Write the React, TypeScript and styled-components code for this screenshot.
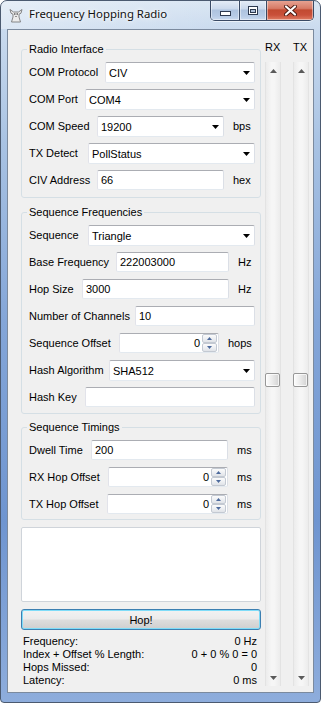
import React from "react";
import styled, { createGlobalStyle } from "styled-components";

type FieldKind = "combo" | "text" | "numeric";

type FieldDef = {
  label: string;
  kind: FieldKind;
  x: number;
  end: number;
  value: string;
  unit?: string;
};

// left edge of row content (page x), everything below is placed from here
const ROW_LEFT = 29;

const radioFields: FieldDef[] = [
  { label: "COM Protocol", kind: "combo", x: 105, end: 255, value: "CIV" },
  { label: "COM Port", kind: "combo", x: 85, end: 255, value: "COM4" },
  { label: "COM Speed", kind: "combo", x: 97, end: 224, value: "19200", unit: "bps" },
  { label: "TX Detect", kind: "combo", x: 88, end: 255, value: "PollStatus" },
  { label: "CIV Address", kind: "text", x: 97, end: 224, value: "66", unit: "hex" },
];

const sequenceFields: FieldDef[] = [
  { label: "Sequence", kind: "combo", x: 88, end: 255, value: "Triangle" },
  { label: "Base Frequency", kind: "text", x: 116, end: 229, value: "222003000", unit: "Hz" },
  { label: "Hop Size", kind: "text", x: 82, end: 229, value: "3000", unit: "Hz" },
  { label: "Number of Channels", kind: "text", x: 135, end: 255, value: "10" },
  { label: "Sequence Offset", kind: "numeric", x: 119, end: 219, value: "0", unit: "hops" },
  { label: "Hash Algorithm", kind: "combo", x: 109, end: 255, value: "SHA512" },
  { label: "Hash Key", kind: "text", x: 85, end: 255, value: "" },
];

const timingFields: FieldDef[] = [
  { label: "Dwell Time", kind: "text", x: 91, end: 228, value: "200", unit: "ms" },
  { label: "RX Hop Offset", kind: "numeric", x: 108, end: 228, value: "0", unit: "ms" },
  { label: "TX Hop Offset", kind: "numeric", x: 107, end: 228, value: "0", unit: "ms" },
];

const stats = [
  ["Frequency:", "0 Hz"],
  ["Index + Offset % Length:", "0 + 0 % 0 = 0"],
  ["Hops Missed:", "0"],
  ["Latency:", "0 ms"],
];

const GlobalStyle = createGlobalStyle`
  html, body {
    margin: 0;
    padding: 0;
    background: #ffffff;
  }
  body {
    font-family: "Liberation Sans", Arial, sans-serif;
    font-size: 11px;
    color: #000;
  }
`;

const Window = styled.div`
  width: 321px;
  height: 703px;
  box-sizing: border-box;
  border: 1px solid #4b5a70;
  border-radius: 7px 7px 4px 4px;
  overflow: hidden;
  display: flex;
  flex-direction: column;
  background: linear-gradient(
    180deg,
    #dae6f3 0px,
    #c9daee 30px,
    #a9c3e3 140px,
    #84a6d8 320px,
    #6f95d0 520px,
    #8eaddc 703px
  );
`;

const TitleBar = styled.div`
  height: 28px;
  flex: none;
  display: flex;
  align-items: flex-start;
  padding-left: 7px;
  background: linear-gradient(90deg, rgba(255, 255, 255, 0.35), rgba(255, 255, 255, 0) 70%);
`;

const AppIcon = styled.svg`
  margin-top: 6px;
  flex: none;
`;

const Title = styled.div`
  margin: 5px 0 0 5px;
  font-family: "Noto Sans", "Open Sans", sans-serif;
  font-size: 11.4px;
  line-height: 16px;
  color: #111;
  text-shadow: 0 0 6px #fff, 0 0 3px #fff;
  flex: 1;
  white-space: nowrap;
`;

const CaptionGroup = styled.div`
  display: flex;
  margin: -1px 6px 0 0;
  height: 20px;
  border: 1px solid #3a4a64;
  border-top: none;
  border-radius: 0 0 5px 5px;
  overflow: hidden;
  box-shadow: 0 1px 0 rgba(255, 255, 255, 0.6);
`;

const CaptionButton = styled.div<{ $w: number; $close?: boolean }>`
  width: ${(p) => p.$w}px;
  height: 100%;
  display: flex;
  align-items: center;
  justify-content: center;
  box-shadow: inset 0 0 0 1px rgba(255, 255, 255, 0.45);
  background: ${(p) =>
    p.$close
      ? "linear-gradient(180deg, #e8a797 0%, #d77a66 42%, #c24a31 50%, #c9503a 75%, #df7c63 100%)"
      : "linear-gradient(180deg, #e7eef7 0%, #cbd9ec 45%, #aec3df 50%, #b7cbe6 80%, #cadaef 100%)"};
  & + & {
    border-left: 1px solid #3a4a64;
  }
`;

const Client = styled.div`
  flex: 1;
  margin: 0 6px 9px 6px;
  border: 1px solid #7b8a9e;
  background: #f0f0f0;
  display: flex;
  align-items: flex-start;
`;

const LeftColumn = styled.div`
  width: 240px;
  margin-left: 13px;
  padding-top: 13px;
  display: flex;
  flex-direction: column;
`;

const Group = styled.fieldset<{ $top: number; $bottom: number }>`
  margin: ${(p) => p.$top}px 0 0 0;
  padding: 6px 0 ${(p) => p.$bottom}px 7px;
  border: 1px solid #d5dfe5;
  border-radius: 3px;
  min-width: 0;
  display: flex;
  flex-direction: column;
  gap: 6px;
`;

const Legend = styled.legend`
  padding: 0 2px;
  margin-left: -2px;
  line-height: 13px;
  font-size: 11px;
`;

const Row = styled.div`
  display: flex;
  align-items: flex-start;
  height: 21px;
`;

const Label = styled.div<{ $w: number }>`
  width: ${(p) => p.$w}px;
  flex: none;
  line-height: 21px;
  white-space: nowrap;
`;

const Box = styled.div<{ $w: number; $h: number }>`
  width: ${(p) => p.$w}px;
  height: ${(p) => p.$h}px;
  box-sizing: border-box;
  flex: none;
  background: #fff;
  border: 1px solid;
  border-color: #abadb3 #dbdfe6 #e3e9ef #e2e3ea;
  border-radius: 2px;
  display: flex;
  align-items: center;
  padding-left: 3px;
  line-height: 16px;
  overflow: hidden;
`;

const BoxText = styled.span<{ $right?: boolean }>`
  flex: 1;
  text-align: ${(p) => (p.$right ? "right" : "left")};
  padding-right: ${(p) => (p.$right ? "2px" : "0")};
  white-space: nowrap;
`;

const ComboArrow = styled.svg`
  flex: none;
  margin-right: 4px;
`;

const Spinner = styled.div`
  width: 15px;
  height: 18px;
  margin-right: 1px;
  display: flex;
  flex-direction: column;
  flex: none;
`;

const SpinButton = styled.div`
  flex: 1;
  box-sizing: border-box;
  border: 1px solid #c3c9d2;
  border-radius: 2px;
  background: linear-gradient(180deg, #fbfbfb 0%, #eef0f3 50%, #e0e3e8 100%);
  display: flex;
  align-items: center;
  justify-content: center;
`;

const Unit = styled.div`
  margin-left: 9px;
  line-height: 21px;
`;

const ListBox = styled.div`
  margin-top: 7px;
  height: 75px;
  box-sizing: border-box;
  background: #fff;
  border: 1px solid #cfd4da;
  border-radius: 2px;
`;

const HopButton = styled.button`
  margin-top: 7px;
  height: 21px;
  padding: 0;
  font-family: "Liberation Sans", Arial, sans-serif;
  font-size: 11px;
  color: #000;
  border: 1px solid #3c7fb1;
  border-radius: 3px;
  box-shadow: inset 0 0 0 1px #7fdcf8;
  background: linear-gradient(180deg, #f2f2f2 0%, #ebebeb 48%, #dddddd 52%, #cfcfcf 100%);
`;

const Stats = styled.div`
  margin-top: 5px;
  padding: 0 4px 0 2px;
  display: flex;
  flex-direction: column;
`;

const StatLine = styled.div`
  display: flex;
  justify-content: space-between;
  line-height: 13px;
  white-space: nowrap;
`;

const BarColumn = styled.div<{ $gap: number }>`
  width: 16px;
  margin-left: ${(p) => p.$gap}px;
  padding-top: 11px;
  display: flex;
  flex-direction: column;
`;

const BarLabel = styled.div`
  line-height: 13px;
  white-space: nowrap;
`;

const ScrollBar = styled.div`
  margin-top: 8px;
  height: 624px;
  box-sizing: border-box;
  border-left: 1px solid #e3e3e3;
  border-right: 1px solid #e3e3e3;
  background: linear-gradient(90deg, #ececec 0%, #f6f6f6 40%, #f6f6f6 60%, #ececec 100%);
  display: flex;
  flex-direction: column;
`;

const ScrollArrow = styled.div`
  height: 17px;
  flex: none;
  display: flex;
  align-items: center;
  justify-content: center;
`;

const Track = styled.div`
  flex: 1;
  display: flex;
  flex-direction: column;
`;

const Thumb = styled.div`
  width: 15px;
  height: 14px;
  margin-left: -1px;
  box-sizing: border-box;
  border: 1px solid #979797;
  border-radius: 2px;
  background: linear-gradient(90deg, #fdfdfd 0%, #ececec 45%, #d2d2d2 100%);
  box-shadow: inset 0 0 0 1px rgba(255, 255, 255, 0.7);
`;

function Field({ f }: { f: FieldDef }) {
  const w = f.end - f.x;
  return (
    <Row>
      <Label $w={f.x - ROW_LEFT}>{f.label}</Label>
      {f.kind === "combo" && (
        <Box $w={w} $h={21}>
          <BoxText>{f.value}</BoxText>
          <ComboArrow width="7" height="4" viewBox="0 0 7 4">
            <path d="M0 0H7L3.5 4Z" fill="#000" />
          </ComboArrow>
        </Box>
      )}
      {f.kind === "text" && (
        <Box $w={w} $h={20}>
          <BoxText>{f.value}</BoxText>
        </Box>
      )}
      {f.kind === "numeric" && (
        <Box $w={w} $h={20}>
          <BoxText $right>{f.value}</BoxText>
          <Spinner>
            <SpinButton>
              <svg width="5" height="3" viewBox="0 0 5 3">
                <path d="M0 3L2.5 0L5 3Z" fill="#4d6a9c" />
              </svg>
            </SpinButton>
            <SpinButton>
              <svg width="5" height="3" viewBox="0 0 5 3">
                <path d="M0 0H5L2.5 3Z" fill="#4d6a9c" />
              </svg>
            </SpinButton>
          </Spinner>
        </Box>
      )}
      {f.unit && <Unit>{f.unit}</Unit>}
    </Row>
  );
}

function VerticalBar({ label, gap, value }: { label: string; gap: number; value: number }) {
  // track is 590px tall, thumb 14px
  const offset = Math.round((590 - 14) * value);
  return (
    <BarColumn $gap={gap}>
      <BarLabel>{label}</BarLabel>
      <ScrollBar>
        <ScrollArrow>
          <svg width="7" height="4" viewBox="0 0 7 4">
            <path d="M0 4L3.5 0L7 4Z" fill="#5a5a5a" />
          </svg>
        </ScrollArrow>
        <Track>
          <Thumb style={{ marginTop: offset }} />
        </Track>
        <ScrollArrow>
          <svg width="7" height="4" viewBox="0 0 7 4">
            <path d="M0 0H7L3.5 4Z" fill="#5a5a5a" />
          </svg>
        </ScrollArrow>
      </ScrollBar>
    </BarColumn>
  );
}

export default function App() {
  return (
    <>
      <GlobalStyle />
      <Window>
        <TitleBar>
          <AppIcon width="16" height="16" viewBox="0 0 16 16">
            <path d="M2 2.5L5.5 5H10.5L14 2.5L13 6.2L11 7.2V10L12.5 15H3.5L5 10V7.2L3 6.2Z" fill="#ececec" stroke="#6d6d6d" strokeWidth="0.8" />
            <circle cx="6.8" cy="7" r="0.8" fill="#333" />
            <circle cx="9.2" cy="7" r="0.8" fill="#333" />
            <path d="M7 9.5H9" stroke="#777" strokeWidth="0.8" />
          </AppIcon>
          <Title>Frequency Hopping Radio</Title>
          <CaptionGroup>
            <CaptionButton $w={28}>
              <svg width="11" height="5" viewBox="0 0 11 5" style={{ marginTop: 6 }}>
                <rect x="0.5" y="0.5" width="10" height="4" fill="#fff" stroke="#2e3a50" />
              </svg>
            </CaptionButton>
            <CaptionButton $w={26}>
              <svg width="10" height="9" viewBox="0 0 10 9">
                <rect x="0.5" y="0.5" width="9" height="8" fill="#fff" stroke="#2e3a50" />
                <rect x="2.5" y="3.5" width="5" height="3" fill="#aebfd8" stroke="#2e3a50" />
              </svg>
            </CaptionButton>
            <CaptionButton $w={46} $close>
              <svg width="13" height="11" viewBox="0 0 13 11">
                <path d="M2 1.5L11 9.5M11 1.5L2 9.5" stroke="#4a1a12" strokeWidth="4" strokeLinecap="round" />
                <path d="M2 1.5L11 9.5M11 1.5L2 9.5" stroke="#fff" strokeWidth="2.2" strokeLinecap="round" />
              </svg>
            </CaptionButton>
          </CaptionGroup>
        </TitleBar>
        <Client>
          <LeftColumn>
            <Group $top={0} $bottom={6}>
              <Legend>Radio Interface</Legend>
              {radioFields.map((f) => (
                <Field key={f.label} f={f} />
              ))}
            </Group>
            <Group $top={8} $bottom={5}>
              <Legend>Sequence Frequencies</Legend>
              {sequenceFields.map((f) => (
                <Field key={f.label} f={f} />
              ))}
            </Group>
            <Group $top={7} $bottom={4}>
              <Legend>Sequence Timings</Legend>
              {timingFields.map((f) => (
                <Field key={f.label} f={f} />
              ))}
            </Group>
            <ListBox />
            <HopButton>Hop!</HopButton>
            <Stats>
              {stats.map(([k, v]) => (
                <StatLine key={k}>
                  <span>{k}</span>
                  <span>{v}</span>
                </StatLine>
              ))}
            </Stats>
          </LeftColumn>
          <VerticalBar label="RX" gap={4} value={0.51} />
          <VerticalBar label="TX" gap={12} value={0.51} />
        </Client>
      </Window>
    </>
  );
}
